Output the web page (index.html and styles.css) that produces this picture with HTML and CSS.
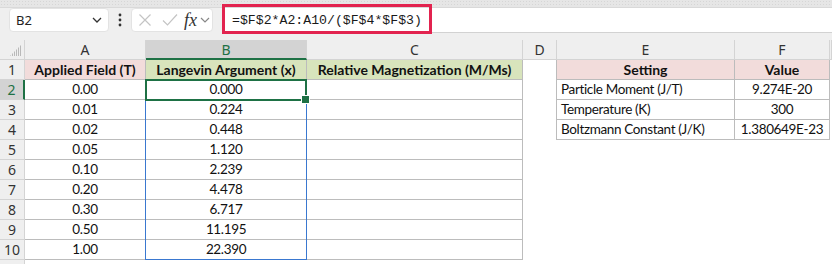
FILE: index.html
```html
<!DOCTYPE html>
<html>
	<head>
		<meta charset="utf-8">
		<title>Langevin sheet</title>
		<link rel="stylesheet" href="styles.css">
	</head>
	<body>
		<div class="strip"></div>
		<div class="formula-bar">
			<div class="name-box">
				<span>B2</span>
				<svg width="10" height="6" viewBox="0 0 10 6"><path d="M1 1 L5 5 L9 1" fill="none" stroke="#333" stroke-width="1.3"/></svg>
			</div>
			<div class="dots">
				<svg width="4" height="14" viewBox="0 0 4 14"><circle cx="2" cy="2" r="1.4" fill="#333"/><circle cx="2" cy="7" r="1.4" fill="#333"/><circle cx="2" cy="12" r="1.4" fill="#333"/></svg>
			</div>
			<div class="fx-box">
				<svg width="14" height="14" viewBox="0 0 14 14"><path d="M1.5 1.5 L12.5 12.5 M12.5 1.5 L1.5 12.5" stroke="#c4c4c4" stroke-width="1.2"/></svg>
				<svg class="check" width="16" height="14" viewBox="0 0 16 14"><path d="M1 7.5 L5.5 12 L15 1.5" fill="none" stroke="#c4c4c4" stroke-width="1.2"/></svg>
				<span class="fx">fx</span>
				<svg width="10" height="6" viewBox="0 0 10 6"><path d="M1 1 L5 5 L9 1" fill="none" stroke="#888" stroke-width="1.2"/></svg>
			</div>
			<div class="formula-input">
				<span class="formula-text">=$F$2*A2:A10/($F$4*$F$3)</span>
				<div class="highlight"></div>
			</div>
		</div>

		<div class="sheet">
			<div class="corner"><span></span></div>
			<div class="colhead">A</div>
			<div class="colhead sel">B</div>
			<div class="colhead">C</div>
			<div class="colhead">D</div>
			<div class="colhead">E</div>
			<div class="colhead">F</div>
			<div class="colhead"></div>

			<div class="rowhead">1</div>
			<div class="cell pink bold">Applied Field (T)</div>
			<div class="cell green bold">Langevin Argument (x)</div>
			<div class="cell green bold">Relative Magnetization (M/Ms)</div>
			<div class="blank edge"></div>
			<div class="cell pink bold">Setting</div>
			<div class="cell pink bold">Value</div>
			<div class="blank"></div>

			<div class="rowhead sel">2</div>
			<div class="cell">0.00</div>
			<div class="cell">0.000</div>
			<div class="cell"></div>
			<div class="blank edge"></div>
			<div class="cell left">Particle Moment (J/T)</div>
			<div class="cell">9.274E-20</div>
			<div class="blank"></div>

			<div class="rowhead">3</div>
			<div class="cell">0.01</div>
			<div class="cell">0.224</div>
			<div class="cell"></div>
			<div class="blank edge"></div>
			<div class="cell left">Temperature (K)</div>
			<div class="cell">300</div>
			<div class="blank"></div>

			<div class="rowhead">4</div>
			<div class="cell">0.02</div>
			<div class="cell">0.448</div>
			<div class="cell"></div>
			<div class="blank edge"></div>
			<div class="cell left">Boltzmann Constant (J/K)</div>
			<div class="cell">1.380649E-23</div>
			<div class="blank"></div>

			<div class="rowhead">5</div>
			<div class="cell">0.05</div>
			<div class="cell">1.120</div>
			<div class="cell"></div>
			<div class="blank"></div><div class="blank"></div><div class="blank"></div><div class="blank"></div>

			<div class="rowhead">6</div>
			<div class="cell">0.10</div>
			<div class="cell">2.239</div>
			<div class="cell"></div>
			<div class="blank"></div><div class="blank"></div><div class="blank"></div><div class="blank"></div>

			<div class="rowhead">7</div>
			<div class="cell">0.20</div>
			<div class="cell">4.478</div>
			<div class="cell"></div>
			<div class="blank"></div><div class="blank"></div><div class="blank"></div><div class="blank"></div>

			<div class="rowhead">8</div>
			<div class="cell">0.30</div>
			<div class="cell">6.717</div>
			<div class="cell"></div>
			<div class="blank"></div><div class="blank"></div><div class="blank"></div><div class="blank"></div>

			<div class="rowhead">9</div>
			<div class="cell">0.50</div>
			<div class="cell">11.195</div>
			<div class="cell"></div>
			<div class="blank"></div><div class="blank"></div><div class="blank"></div><div class="blank"></div>

			<div class="rowhead">10</div>
			<div class="cell">1.00</div>
			<div class="cell">22.390</div>
			<div class="cell"></div>
			<div class="blank"></div><div class="blank"></div><div class="blank"></div><div class="blank"></div>

			<div class="rowhead"></div>

			<div class="range"></div>
			<div class="active"></div>
		</div>
	</body>
</html>
```

FILE: styles.css
```css
* {
	box-sizing: border-box;
}
html, body {
	margin: 0;
	height: 264px;
	overflow: hidden;
	background: #ffffff;
}
.strip {
	height: 8px;
	background-color: #e6e6e6;
	background-image: radial-gradient(#d6d6d6 0.7px, transparent 0.8px);
	background-size: 3px 3px;
	border-bottom: 1px solid #d9d9d9;
}
.formula-bar {
	display: flex;
	align-items: flex-start;
	height: 32px;
	background: #efefef;
}
.name-box {
	margin-left: 9px;
	width: 100px;
	height: 24px;
	background: #fff;
	border: 1px solid #e3e3e3;
	border-radius: 4px;
	display: flex;
	align-items: center;
	justify-content: space-between;
	padding: 0 6px 0 6px;
	font: 13px "Noto Sans", sans-serif;
	color: #222;
}
.dots {
	width: 22px;
	height: 24px;
	display: flex;
	align-items: center;
	justify-content: center;
}
.fx-box {
	width: 82px;
	height: 24px;
	background: #fff;
	border: 1px solid #e3e3e3;
	border-radius: 4px;
	display: flex;
	align-items: center;
	padding-left: 6px;
}
.fx-box .check {
	margin-left: 10px;
}
.fx {
	margin-left: 6px;
	margin-right: 3px;
	font: italic 18px "Liberation Serif", serif;
	color: #333;
	line-height: 1;
}
.formula-input {
	position: relative;
	margin-left: 9px;
	flex: 1;
	height: 25px;
	background: #fff;
	border-bottom: 1px solid #d2d2d2;
	display: flex;
	align-items: center;
	padding-left: 10px;
	padding-top: 1px;
}
.formula-text {
	font: 13.2px "Liberation Mono", monospace;
	color: #1a1a1a;
}
.highlight {
	position: absolute;
	left: 0;
	top: -4px;
	width: 210px;
	height: 30px;
	border: 3px solid #e2234f;
}
.sheet {
	position: relative;
	display: grid;
	grid-template-columns: 25px 121px 161px 216px 34px 178px 95px 2px;
	grid-auto-rows: 20px;
	font: 13.5px "Lato", sans-serif;
	letter-spacing: -0.35px;
	color: #111;
}
.corner, .colhead, .rowhead {
	background: #efefef;
	border-right: 1px solid #d4d4d4;
	border-bottom: 1px solid #d4d4d4;
	font: 14px "Noto Sans", sans-serif;
	letter-spacing: 0;
	color: #333;
	text-align: center;
	line-height: 19px;
}
.corner {
	position: relative;
}
.corner span {
	position: absolute;
	right: 3px;
	bottom: 3px;
	width: 11px;
	height: 11px;
	background: repeating-linear-gradient(90deg, #b9b9b9 0 1px, transparent 1px 2px);
	clip-path: polygon(100% 0, 100% 100%, 0 100%);
}
.colhead.sel {
	background: #d3d3d3;
	border-bottom: 2px solid #1e7145;
	color: #1e7145;
}
.rowhead.sel {
	background: #d3d3d3;
	border-right: 2px solid #1e7145;
	color: #1e7145;
}
.cell {
	border-right: 1px solid #bcbcbc;
	border-bottom: 1px solid #bcbcbc;
	text-align: center;
	line-height: 19px;
	padding: 0 4px;
	white-space: nowrap;
	overflow: hidden;
}
.cell.left {
	text-align: left;
}
.bold {
	font-size: 14px;
	font-weight: 700;
	letter-spacing: 0;
}
.pink {
	background: #f2dcdb;
}
.green {
	background: #d8e4bc;
}
.blank.edge {
	border-right: 1px solid #bcbcbc;
}
.range {
	position: absolute;
	left: 145px;
	top: 39px;
	width: 162px;
	height: 181px;
	border: 1px solid #3a78d0;
}
.active {
	position: absolute;
	left: 145px;
	top: 39px;
	width: 162px;
	height: 22px;
	border: 2px solid #1e7145;
}
.active::after {
	content: "";
	position: absolute;
	right: -5px;
	bottom: -5px;
	width: 7px;
	height: 7px;
	background: #1e7145;
	border: 1px solid #fff;
}
```
